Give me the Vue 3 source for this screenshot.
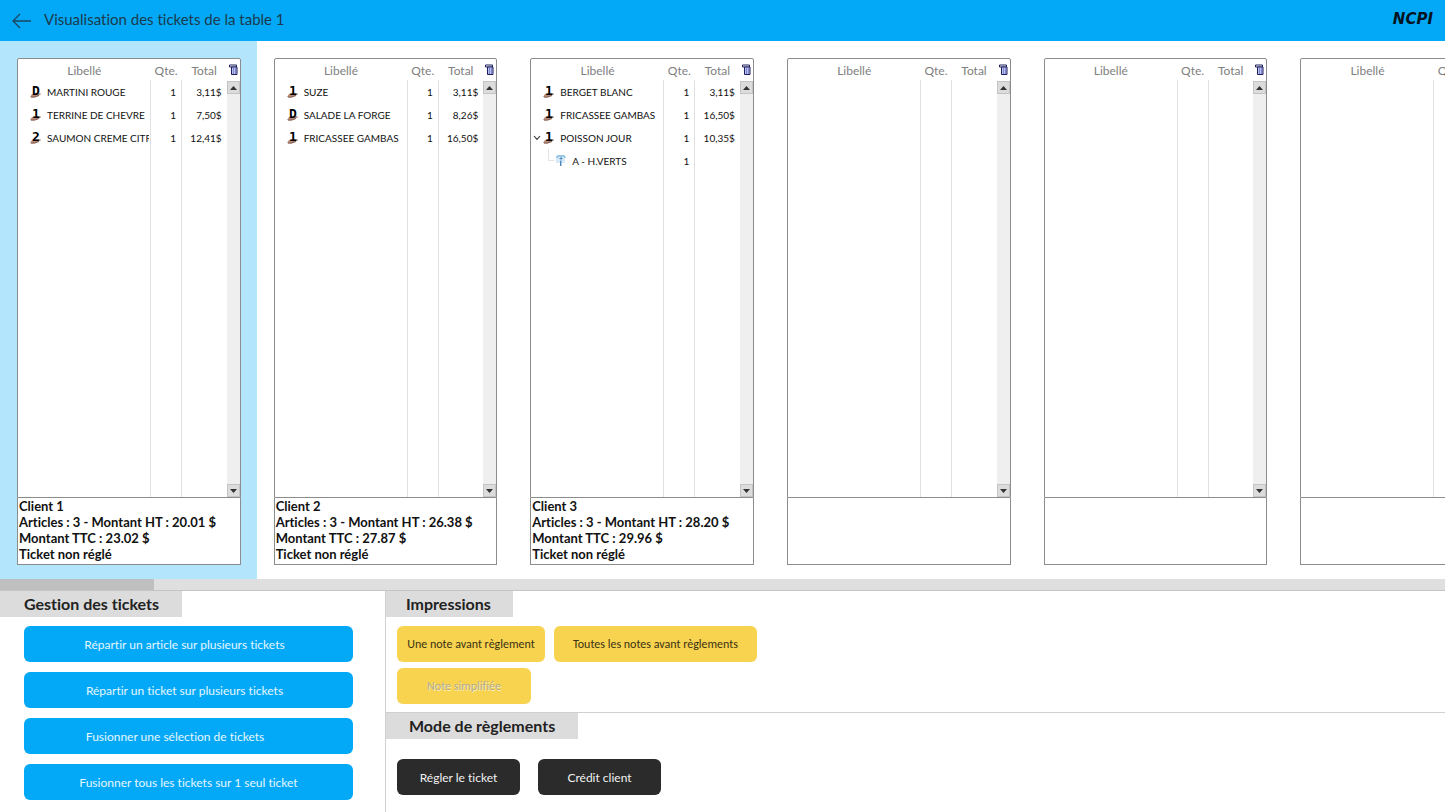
<script setup>
import { ref } from 'vue'

const selected = ref(0)

const tickets = [
  {
    id: 1,
    lines: [
      { icon: 'D', label: 'MARTINI ROUGE', qty: 1, total: '3,11$' },
      { icon: '1', label: 'TERRINE DE CHEVRE', qty: 1, total: '7,50$' },
      { icon: '2', label: 'SAUMON CREME CITRON', qty: 1, total: '12,41$' }
    ],
    info: ['Client 1', 'Articles : 3 - Montant HT : 20.01 $', 'Montant TTC : 23.02 $', 'Ticket non réglé']
  },
  {
    id: 2,
    lines: [
      { icon: '1', label: 'SUZE', qty: 1, total: '3,11$' },
      { icon: 'D', label: 'SALADE LA FORGE', qty: 1, total: '8,26$' },
      { icon: '1', label: 'FRICASSEE GAMBAS', qty: 1, total: '16,50$' }
    ],
    info: ['Client 2', 'Articles : 3 - Montant HT : 26.38 $', 'Montant TTC : 27.87 $', 'Ticket non réglé']
  },
  {
    id: 3,
    lines: [
      { icon: '1', label: 'BERGET BLANC', qty: 1, total: '3,11$' },
      { icon: '1', label: 'FRICASSEE GAMBAS', qty: 1, total: '16,50$' },
      { icon: '1', label: 'POISSON JOUR', qty: 1, total: '10,35$', open: true },
      { child: true, label: 'A - H.VERTS', qty: 1, total: '' }
    ],
    info: ['Client 3', 'Articles : 3 - Montant HT : 28.20 $', 'Montant TTC : 29.96 $', 'Ticket non réglé']
  },
  { id: 4, lines: [], info: [] },
  { id: 5, lines: [], info: [] },
  { id: 6, lines: [], info: [] }
]

const manage = [
  { label: 'Répartir un article sur plusieurs tickets', shift: 'near' },
  { label: 'Répartir un ticket sur plusieurs tickets', shift: 'near' },
  { label: 'Fusionner une sélection de tickets', shift: 'far' },
  { label: 'Fusionner tous les tickets sur 1 seul ticket', shift: '' }
]
</script>

<template>
  <div class="page">
    <header class="bar">
      <button class="back" type="button" aria-label="Retour">
        <svg width="20" height="16" viewBox="0 0 20 16" fill="none" stroke="#1d4560" stroke-width="1.3">
          <path d="M19 8H1M8 1L1 8l7 7" />
        </svg>
      </button>
      <h1>Visualisation des tickets de la table 1</h1>
      <span class="logo">NCPI</span>
    </header>

    <main class="strip">
      <section
        v-for="(t, i) in tickets"
        :key="t.id"
        class="slot"
        :class="{ selected: i === selected }"
        @click="selected = i"
      >
        <div class="list">
          <table>
            <colgroup>
              <col />
              <col class="c-qty" />
              <col class="c-total" />
            </colgroup>
            <thead>
              <tr>
                <th>Libellé</th>
                <th>Qte.</th>
                <th>Total</th>
              </tr>
            </thead>
            <tbody>
              <tr v-for="(l, k) in t.lines" :key="k" class="line">
                <td class="name">
                  <div class="item" :class="{ child: l.child }">
                    <span class="twist">
                      <svg v-if="l.open" width="8" height="6" viewBox="0 0 8 6" fill="none" stroke="#333" stroke-width="1.1">
                        <path d="M1 1l3 3.4L7 1" />
                      </svg>
                      <svg v-if="l.child" class="branch" width="10" height="23" viewBox="0 0 10 23" fill="none" stroke="#e4e4e4">
                        <path d="M3.5 0v11.500h6" />
                      </svg>
                    </span>
                    <svg v-if="l.child" class="mark" width="12" height="14" viewBox="0 0 12 14">
                      <path d="M1 1h9v8H1z" fill="#d6eaf7" />
                      <path d="M2 4c0-2 2.500-3 4-1.500C7.500 1 10 2 10 4M6 2.500v9.500" fill="none" stroke="#8fbfe2" stroke-width="1.6" />
                      <path d="M4.500 4.500h3M5.500 7v5" fill="none" stroke="#3f74a3" stroke-width=".8" />
                    </svg>
                    <svg v-else class="mark" width="12" height="14" viewBox="0 0 12 14">
                      <path d="M0 12l2-3 3-.5 5.500-.3.5 1L8 11l-4 1.500z" fill="#b98b78" />
                      <path d="M1 12.200l4-.2 4-1.500" fill="none" stroke="#6d4a40" stroke-width=".8" />
                      <text x="6" y="10" text-anchor="middle" class="glyph">{{ l.icon }}</text>
                    </svg>
                    <span>{{ l.label }}</span>
                  </div>
                </td>
                <td class="num">{{ l.qty }}</td>
                <td class="num">{{ l.total }}</td>
              </tr>
              <tr>
                <td class="name"></td>
                <td></td>
                <td></td>
              </tr>
            </tbody>
          </table>
          <div class="side">
            <button class="pick" type="button" aria-label="Colonnes">
              <svg width="9" height="11" viewBox="0 0 9 11">
                <path d="M.5 1h7v2h-7z" fill="#fff" stroke="#1c1f5c" />
                <path d="M2.500 3h5.500v7.500H2.500z" fill="#b9bff0" stroke="#1c1f5c" />
                <path d="M4.500 4v6M6.500 4v6" stroke="#6670c0" stroke-width=".7" />
              </svg>
            </button>
            <button class="step" type="button" aria-label="Monter">
              <svg width="7" height="4" viewBox="0 0 7 4"><path d="M0 4l3.500-4L7 4z" fill="#333" /></svg>
            </button>
            <div class="rail"></div>
            <button class="step" type="button" aria-label="Descendre">
              <svg width="7" height="4" viewBox="0 0 7 4"><path d="M0 0h7L3.500 4z" fill="#333" /></svg>
            </button>
          </div>
        </div>
        <div class="info">
          <p v-for="s in t.info" :key="s">{{ s }}</p>
        </div>
      </section>
    </main>

    <div class="scroll"><div class="thumb"></div></div>

    <footer class="tools">
      <section class="left">
        <h2>Gestion des tickets</h2>
        <div class="stack">
          <button v-for="m in manage" :key="m.label" type="button" class="btn blue" :class="m.shift">{{ m.label }}</button>
        </div>
      </section>
      <div class="right">
        <section class="prints">
          <h2>Impressions</h2>
          <div class="row">
            <button type="button" class="btn yellow">Une note avant règlement</button>
            <button type="button" class="btn yellow wide">Toutes les notes avant règlements</button>
          </div>
          <div class="row">
            <button type="button" class="btn yellow simple" disabled>Note simplifiée</button>
          </div>
        </section>
        <section class="pay">
          <h2>Mode de règlements</h2>
          <div class="row">
            <button type="button" class="btn dark">Régler le ticket</button>
            <button type="button" class="btn dark">Crédit client</button>
          </div>
        </section>
      </div>
    </footer>
  </div>
</template>

<style>
body {
  background: #fff;
  overflow: hidden;
}
</style>

<style scoped>
.page {
  display: flex;
  flex-direction: column;
  min-height: 100vh;
  font-family: Lato, "Liberation Sans", sans-serif;
  font-variant-ligatures: none;
  color: #111;
}
.page * {
  box-sizing: border-box;
}
button {
  border: 0;
  padding: 0;
  margin: 0;
  background: none;
  font-family: inherit;
  font-variant-ligatures: none;
  display: flex;
  align-items: center;
  justify-content: center;
}
h1, h2, p {
  margin: 0;
}

.bar {
  display: flex;
  align-items: center;
  height: 41px;
  padding: 0 12px;
  background: #03a9f7;
}
.back {
  width: 20px;
  margin-right: 12px;
}
h1 {
  flex: 1;
  padding-bottom: 3px;
  font-size: 15px;
  line-height: 20px;
  font-weight: 400;
  color: #1c3a4d;
}
.logo {
  padding-bottom: 4px;
  font: italic 700 15px/20px "DejaVu Sans", sans-serif;
  color: #06141f;
}

.strip {
  flex: 1;
  display: grid;
  grid-auto-flow: column;
  grid-auto-columns: 17.76%;
  overflow: hidden;
}
.slot {
  display: flex;
  flex-direction: column;
  padding: 17px 16px 14px 17px;
}
.selected {
  background: #b3e5fc;
}
.list {
  flex: 1;
  display: grid;
  grid-template-columns: 1fr 13px;
  background: #fff;
  border: 1px solid #8c8c8c;
  border-radius: 2px 2px 0 0;
}
table {
  width: 100%;
  height: 100%;
  table-layout: fixed;
  border-collapse: collapse;
}
.c-qty {
  width: 31px;
}
.c-total {
  width: 45px;
}
th {
  height: 21px;
  padding: 2px 0 0;
  font-size: 12px;
  line-height: 19px;
  font-weight: 400;
  color: #808080;
}
td {
  padding: 0;
  font-size: 10px;
}
td.name, td:nth-child(2) {
  border-right: 1px solid #e0e0e0;
}
.line {
  height: 23px;
}
.line td {
  height: 23px;
}
.item {
  display: flex;
  align-items: center;
  height: 23px;
  margin-right: 1px;
  overflow: hidden;
  white-space: nowrap;
}
.twist {
  display: flex;
  flex: none;
  justify-content: center;
  width: 12px;
}
.child .twist {
  justify-content: flex-end;
  width: 24px;
}
.mark {
  flex: none;
  margin-right: 5px;
  overflow: visible;
}
.glyph {
  font: 700 13px "DejaVu Sans Mono", monospace;
  fill: #000;
}
.line .num {
  text-align: right;
  padding-right: 5px;
}

.side {
  display: flex;
  flex-direction: column;
}
.pick {
  height: 22px;
  padding-bottom: 2px;
}
.step {
  height: 13px;
  background: #dcdcdc;
  border: 1px solid #c4c4c4;
}
.rail {
  flex: 1;
  background: #efefef;
}
.info {
  height: 67px;
  padding: 0 1px;
  background: #fff;
  border: 1px solid #8c8c8c;
  border-top: 0;
  font-size: 13px;
  line-height: 16px;
  font-weight: 700;
  white-space: nowrap;
}

.scroll {
  height: 12px;
  background: #dfdfdf;
  border-bottom: 1px solid #c4c4c4;
}
.thumb {
  width: 154px;
  height: 11px;
  background: #bfbfbf;
}

.tools {
  display: flex;
}
.left {
  width: 385px;
  padding-bottom: 12px;
}
h2 {
  width: fit-content;
  padding: 0 23px;
  background: #dcdcdc;
  font-size: 16px;
  line-height: 26px;
  font-weight: 700;
  color: #222;
}
.left h2 {
  padding-left: 24px;
}
.stack {
  display: flex;
  flex-direction: column;
  gap: 10px;
  padding: 9px 32px 0 24px;
}
.btn {
  height: 36px;
  border-radius: 6px;
  font-size: 12px;
  white-space: nowrap;
}
.blue {
  background: #03a9f7;
  color: #e6f6ff;
}
.near {
  padding-right: 8px;
}
.far {
  padding-right: 27px;
}
.right {
  flex: 1;
  border-left: 1px solid #d0d0d0;
}
.prints {
  display: flex;
  flex-direction: column;
  height: 122px;
  border-bottom: 1px solid #d0d0d0;
}
.prints h2 {
  padding: 0 22px 0 20px;
}
.row {
  display: flex;
  gap: 9px;
  padding-left: 11px;
}
.prints .row {
  margin-bottom: 6px;
}
.prints h2 + .row {
  margin-top: 9px;
}
.yellow {
  width: 148px;
  font-family: Carlito, Lato, sans-serif;
  background: #f8d34f;
  color: #3a3213;
}
.wide {
  width: 203px;
}
.simple {
  width: 134px;
  color: #b3ab90;
  text-shadow: 1px 1px 0 #fbeebb;
}
.pay .row {
  gap: 18px;
  margin-top: 20px;
}
.dark {
  width: 123px;
  background: #2b2b2b;
  color: #f2f2f2;
}
</style>
